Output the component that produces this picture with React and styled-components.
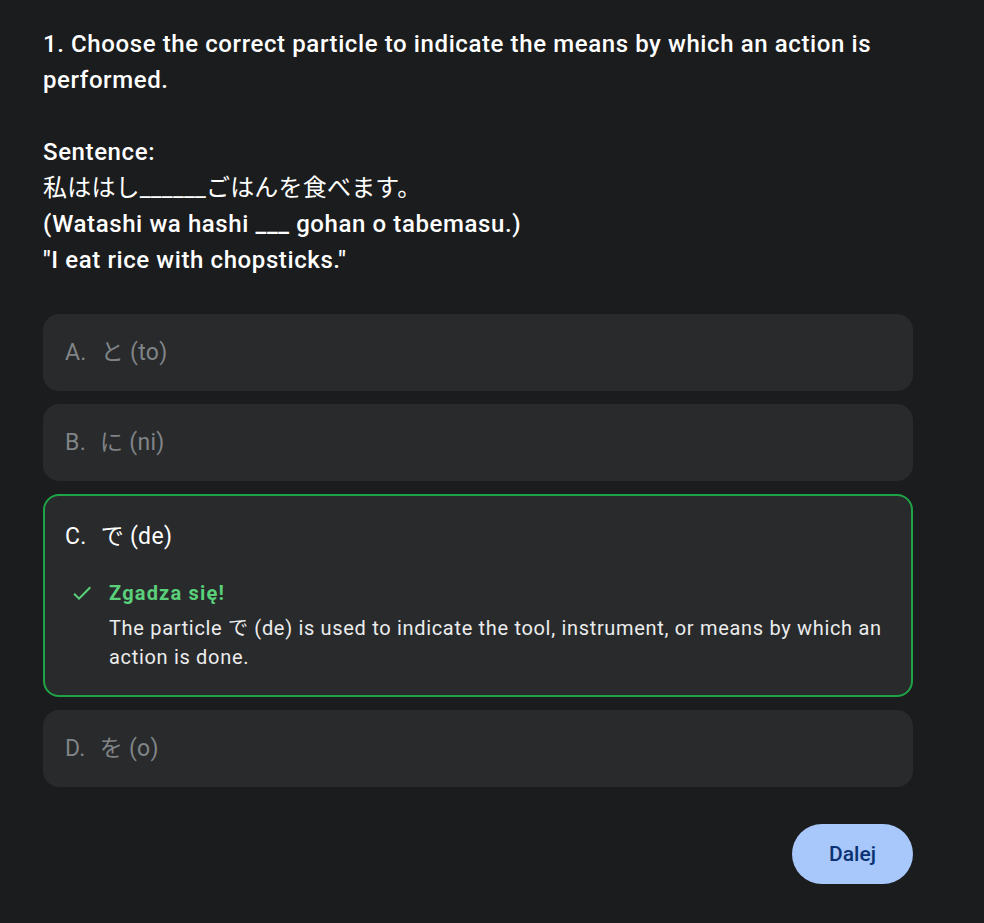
import React from "react";
import styled, { createGlobalStyle } from "styled-components";

const GlobalStyle = createGlobalStyle`
  html, body {
    margin: 0;
    padding: 0;
    background: #1b1c1d;
  }
  body {
    font-family: Roboto, "Noto Sans CJK JP", "Noto Sans", sans-serif;
    color: #e3e3e3;
  }
`;

const Page = styled.div`
  width: 870px;
  padding: 26px 0 40px 43px;
`;

const Question = styled.div`
  font-size: 24px;
  font-weight: 500;
  line-height: 36px;
  letter-spacing: 0.6px;
  color: #ffffff;
  margin-bottom: 36px;
`;

const Sentence = styled.div`
  margin-top: 36px;
`;

const Japanese = styled.div`
  font-weight: 400;
  letter-spacing: 0.2px;
`;

const Options = styled.div`
  display: flex;
  flex-direction: column;
  gap: 13px;
`;

const Option = styled.div`
  background: #282a2c;
  border-radius: 16px;
  border: 2px solid ${(p) => (p.$correct ? "#1ea446" : "transparent")};
  padding: ${(p) => (p.$correct ? "26px 20px 23px" : "22px 20px")};
  color: ${(p) => (p.$correct ? "#ffffff" : "#808487")};
  font-size: 23px;
  line-height: 29px;
  letter-spacing: 0.3px;
`;

const Label = styled.div`
  display: flex;
  gap: 14px;
`;

const Feedback = styled.div`
  display: flex;
  gap: 15px;
  margin-top: 28px;
  padding-left: 5px;
`;

const Check = styled.svg`
  flex: none;
  width: 24px;
  height: 24px;
  margin-top: 2px;
  fill: #5bd07a;
`;

const FeedbackBody = styled.div`
  display: flex;
  flex-direction: column;
  padding-right: 2px;
`;

const Verdict = styled.div`
  font-size: 20px;
  font-weight: 700;
  line-height: 28px;
  letter-spacing: 1.2px;
  color: #5bd07a;
  margin-bottom: 7px;
`;

const Explanation = styled.div`
  font-size: 20px;
  line-height: 29px;
  letter-spacing: 0.68px;
  color: #ececec;
`;

const Footer = styled.div`
  display: flex;
  justify-content: flex-end;
  margin-top: 37px;
`;

const NextButton = styled.button`
  width: 121px;
  height: 60px;
  border: none;
  border-radius: 30px;
  background: #a8c7fa;
  color: #0a3273;
  font-family: Roboto, sans-serif;
  font-size: 21px;
  font-weight: 500;
  cursor: pointer;
`;

const options = [
  { letter: "A.", text: "と (to)" },
  { letter: "B.", text: "に (ni)" },
  { letter: "C.", text: "で (de)", correct: true },
  { letter: "D.", text: "を (o)" },
];

export default function App() {
  return (
    <>
      <GlobalStyle />
      <Page>
        <Question>
          1. Choose the correct particle to indicate the means by which an action is
          performed.
          <Sentence>
            Sentence:
            <Japanese>私ははし______ごはんを食べます。</Japanese>
            (Watashi wa hashi ___ gohan o tabemasu.)
            <br />
            "I eat rice with chopsticks."
          </Sentence>
        </Question>
        <Options>
          {options.map((o) => (
            <Option key={o.letter} $correct={o.correct}>
              <Label>
                <span>{o.letter}</span>
                <span>{o.text}</span>
              </Label>
              {o.correct && (
                <Feedback>
                  <Check viewBox="0 0 24 24">
                    <path d="M9 16.17 4.83 12l-1.42 1.41L9 19 21 7l-1.41-1.41z" />
                  </Check>
                  <FeedbackBody>
                    <Verdict>Zgadza się!</Verdict>
                    <Explanation>
                      The particle で (de) is used to indicate the tool, instrument, or means by which an
                      action is done.
                    </Explanation>
                  </FeedbackBody>
                </Feedback>
              )}
            </Option>
          ))}
        </Options>
        <Footer>
          <NextButton>Dalej</NextButton>
        </Footer>
      </Page>
    </>
  );
}
